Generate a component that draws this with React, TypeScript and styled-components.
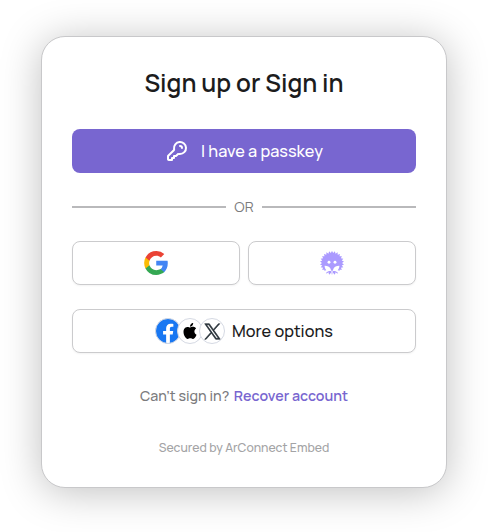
import React from "react";
import styled, { createGlobalStyle } from "styled-components";

const GlobalStyle = createGlobalStyle`
  * { box-sizing: border-box; }
  body { margin: 0; background: #fff; font-family: Manrope, Inter, sans-serif; }
`;

const Page = styled.main`
  height: 532px;
  padding: 36px 41px;
  overflow: hidden;
`;

const Card = styled.section`
  width: 406px;
  height: 452px;
  border: 1px solid #c8c8ca;
  border-radius: 24px;
  background: #fff;
  box-shadow: 0 4px 40px rgba(0, 0, 0, 0.25);
  padding: 28px 30px 0;
  display: flex;
  flex-direction: column;
`;

const Title = styled.h1`
  margin: 0 0 26px;
  height: 38px;
  line-height: 36px;
  text-align: center;
  white-space: nowrap;
  font-size: 24.42px;
  font-weight: 600;
  color: #1c1c1d;
`;

const Button = styled.button<{ $primary?: boolean; $gap?: number }>`
  flex: 1;
  width: 100%;
  min-height: 44px;
  max-height: 44px;
  padding: 0;
  display: flex;
  align-items: center;
  justify-content: center;
  gap: ${(p) => p.$gap ?? 0}px;
  border: ${(p) => (p.$primary ? "0" : "1px solid #cbcbcd")};
  border-radius: 8px;
  background: ${(p) => (p.$primary ? "#7866d0" : "#fff")};
  box-shadow: ${(p) => (p.$primary ? "none" : "0 1px 2px rgba(0, 0, 0, 0.05)")};
  color: ${(p) => (p.$primary ? "#fff" : "#1c1c1d")};
`;

const Label = styled.span`
  font: 500 16.28px/24px Manrope, Inter, sans-serif;
  white-space: nowrap;
`;

const Divider = styled.div`
  height: 20px;
  margin: 24px 0;
  display: flex;
  align-items: center;
  gap: 8px;
  color: #7b7b7d;
  font-size: 14.24px;
  line-height: 20px;
`;

const Rule = styled.span`
  flex: 1;
  height: 2px;
  background: #b9b9bb;
`;

const Providers = styled.div`
  display: flex;
  gap: 8px;
  margin-bottom: 24px;
`;

const Badges = styled.span`
  display: flex;
`;

const Badge = styled.span<{ $blue?: boolean }>`
  width: 26px;
  height: 26px;
  border: 1px solid #d5d9e3;
  border-radius: 50%;
  background: ${(p) => (p.$blue ? "#1877f2" : "#fff")};
  display: flex;
  align-items: center;
  justify-content: center;
  overflow: hidden;
  & + & { margin-left: -4px; }
`;

const Recovery = styled.p`
  margin: 33px 0 0;
  height: 20px;
  display: flex;
  justify-content: center;
  gap: 4.5px;
  font-size: 14.24px;
  line-height: 20px;
  font-weight: 500;
  color: #7b7b7d;
  white-space: nowrap;
`;

const RecoverLink = styled.a`
  color: #7866d0;
  font-weight: 600;
`;

const Footer = styled.footer`
  margin-top: 33px;
  text-align: center;
  font-size: 12.2px;
  line-height: 18px;
  font-weight: 500;
  color: #a3a3a5;
  white-space: nowrap;
`;

const KeyIcon = () => (
  <svg width="24" height="24" viewBox="0 0 24 24" fill="none" stroke="#fff" strokeWidth="2" strokeLinecap="round" strokeLinejoin="round">
    <path d="M17 9a2 2 0 0 0-2-2m0 8a6 6 0 1 0-5.946-5.193c.058.434.087.651.068.789a.853.853 0 0 1-.117.346c-.068.121-.187.24-.426.479l-5.11 5.11c-.173.173-.26.26-.322.36a1 1 0 0 0-.12.29C3 17.296 3 17.418 3 17.663V19.4c0 .56 0 .84.109 1.054a1 1 0 0 0 .437.437C3.76 21 4.04 21 4.6 21H7v-2h2v-2h2l1.58-1.58c.238-.238.357-.357.478-.425a.852.852 0 0 1 .346-.117c.138-.02.355.01.789.068.264.035.533.054.807.054Z" />
  </svg>
);

const GoogleIcon = () => (
  <svg width="24" height="24" viewBox="0 0 24 24">
    <path fill="#4285F4" d="M23.77 12.28c0-.82-.07-1.64-.21-2.43H12.24v4.63h6.48a5.57 5.57 0 0 1-2.4 3.65v3.01h3.87c2.27-2.09 3.58-5.17 3.58-8.86Z" />
    <path fill="#34A853" d="M12.24 24c3.24 0 5.97-1.06 7.96-2.88l-3.87-3c-1.07.73-2.46 1.14-4.09 1.14-3.13 0-5.79-2.11-6.74-4.96h-4v3.09A12.02 12.02 0 0 0 12.24 24Z" />
    <path fill="#FBBC04" d="M5.5 14.3a7.2 7.2 0 0 1 0-4.6V6.61h-4a12.02 12.02 0 0 0 0 10.78l4-3.09Z" />
    <path fill="#EA4335" d="M12.24 4.74c1.71-.03 3.36.62 4.6 1.8l3.43-3.42A11.53 11.53 0 0 0 12.24 0 12.02 12.02 0 0 0 1.5 6.61l4 3.09c.95-2.85 3.61-4.96 6.74-4.96Z" />
  </svg>
);

const SPIKE_COUNT = 26;
const spikes = Array.from({ length: SPIKE_COUNT * 2 }, (_, i) => {
  const r = i % 2 ? 10 : 12.1;
  const a = (i / (SPIKE_COUNT * 2)) * Math.PI * 2 - Math.PI / 2;
  return `${(12 + r * Math.cos(a)).toFixed(2)},${(12 + r * Math.sin(a)).toFixed(2)}`;
}).join(" ");

/* Spiky head with two eyes above a pair of open hands. */
const HedgehogIcon = () => (
  <svg width="24" height="24" viewBox="0 0 24 24">
    <polygon fill="#ab9aff" points={spikes} />
    <g fill="#fff">
      <circle cx="9" cy="11.2" r="1.45" />
      <circle cx="15" cy="11.2" r="1.45" />
      <path d="M4.6 14.8c2.7-.1 5 1 6.1 3.1l.4 2.2c-1.9-.1-3.2.3-4.5 1.1l-2.9.2-.6-1.3 3.2-.9c-1-1-1.7-2.5-1.7-4.4Z" />
      <path d="M19.4 14.8c-2.7-.1-5 1-6.1 3.1l-.4 2.2c1.9-.1 3.2.3 4.5 1.1l2.9.2.6-1.3-3.2-.9c1-1 1.7-2.5 1.7-4.4Z" />
      <path d="M11.4 19.5h1.2V24h-1.2Z" />
    </g>
  </svg>
);

const FacebookIcon = () => (
  <svg width="24" height="24" viewBox="0 0 24 24">
    <path fill="#fff" d="m16.67 15.47.54-3.47h-3.33V9.75c0-.95.46-1.88 1.96-1.88h1.51V4.92S15.98 4.69 14.67 4.69c-2.74 0-4.54 1.66-4.54 4.67V12H7.08v3.47h3.05V24h3.75v-8.53h2.79Z" />
  </svg>
);

const AppleIcon = () => (
  <svg width="16" height="16" viewBox="0 0 24 24">
    <path d="M12.15 6.9c-.95 0-2.42-1.08-3.96-1.04-2.04.03-3.91 1.18-4.96 3.01-2.12 3.68-.55 9.1 1.52 12.09 1.01 1.45 2.21 3.09 3.79 3.04 1.52-.07 2.09-.99 3.94-.99 1.83 0 2.35.99 3.96.95 1.64-.03 2.68-1.48 3.68-2.95 1.16-1.69 1.64-3.32 1.66-3.42-.04-.01-3.18-1.22-3.22-4.86-.03-3.04 2.48-4.49 2.6-4.56-1.43-2.09-3.62-2.32-4.39-2.38-2-.16-3.68 1.09-4.62 1.09v.02ZM15.53 3.83C16.37 2.82 16.93 1.4 16.77 0c-1.21.05-2.66.81-3.53 1.82-.78.9-1.45 2.34-1.27 3.71 1.34.1 2.71-.69 3.56-1.7" />
  </svg>
);

const XIcon = () => (
  <svg width="17" height="17" viewBox="0 0 24 24">
    <path fill="#242e36" stroke="#242e36" strokeWidth="0.9" d="M14.1 10.32 22.28 1h-1.94l-7.1 8.09L7.56 1H1.02l8.58 12.24L1.02 23h1.94l7.5-8.53 5.99 8.53H23l-8.9-12.68Zm-2.66 3.02-.87-1.22L3.66 2.43h2.98l5.58 7.83.87 1.22 7.25 10.17h-2.98l-5.92-8.31Z" />
  </svg>
);

export default function App() {
  return (
    <>
      <GlobalStyle />
      <Page>
        <Card>
          <Title>Sign up or Sign in</Title>
          <Button $primary $gap={12}>
            <KeyIcon />
            <Label>I have a passkey</Label>
          </Button>
          <Divider>
            <Rule />
            OR
            <Rule />
          </Divider>
          <Providers>
            <Button aria-label="Google"><GoogleIcon /></Button>
            <Button aria-label="Othent"><HedgehogIcon /></Button>
          </Providers>
          <Button $gap={7}>
            <Badges>
              <Badge $blue><FacebookIcon /></Badge>
              <Badge><AppleIcon /></Badge>
              <Badge><XIcon /></Badge>
            </Badges>
            <Label>More options</Label>
          </Button>
          <Recovery>
            <span>Can't sign in?</span>
            <RecoverLink>Recover account</RecoverLink>
          </Recovery>
          <Footer>Secured by ArConnect Embed</Footer>
        </Card>
      </Page>
    </>
  );
}
